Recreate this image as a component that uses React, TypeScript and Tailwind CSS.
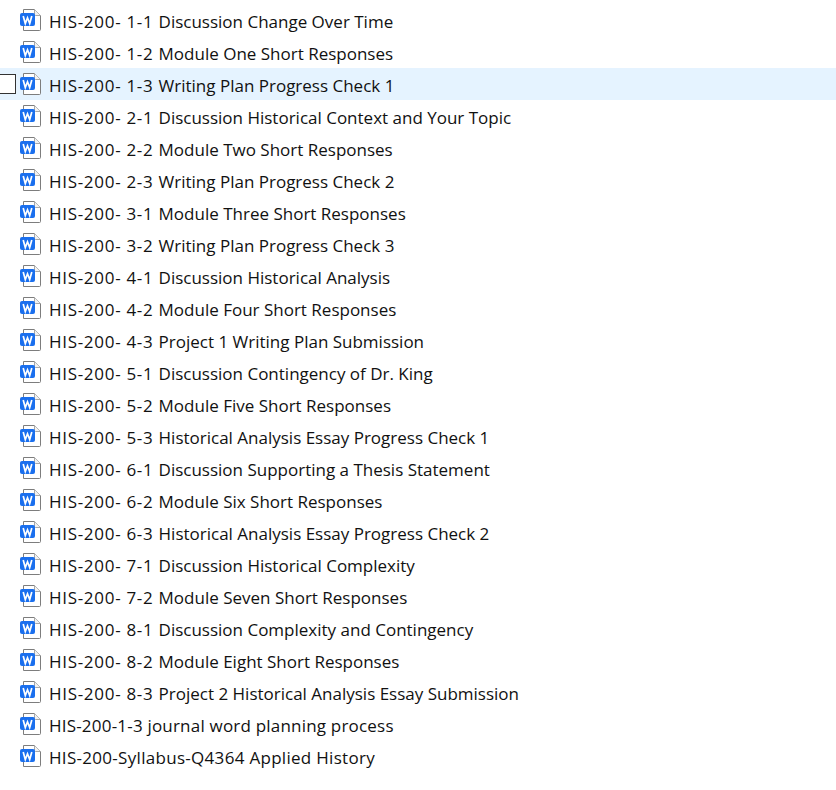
const FILES = [
  'HIS-200- 1-1 Discussion Change Over Time',
  'HIS-200- 1-2 Module One Short Responses',
  'HIS-200- 1-3 Writing Plan Progress Check 1',
  'HIS-200- 2-1 Discussion Historical Context and Your Topic',
  'HIS-200- 2-2 Module Two Short Responses',
  'HIS-200- 2-3 Writing Plan Progress Check 2',
  'HIS-200- 3-1 Module Three Short Responses',
  'HIS-200- 3-2 Writing Plan Progress Check 3',
  'HIS-200- 4-1 Discussion Historical Analysis',
  'HIS-200- 4-2 Module Four Short Responses',
  'HIS-200- 4-3 Project 1 Writing Plan Submission',
  'HIS-200- 5-1 Discussion Contingency of Dr. King',
  'HIS-200- 5-2 Module Five Short Responses',
  'HIS-200- 5-3 Historical Analysis Essay Progress Check 1',
  'HIS-200- 6-1 Discussion Supporting a Thesis Statement',
  'HIS-200- 6-2 Module Six Short Responses',
  'HIS-200- 6-3 Historical Analysis Essay Progress Check 2',
  'HIS-200- 7-1 Discussion Historical Complexity',
  'HIS-200- 7-2 Module Seven Short Responses',
  'HIS-200- 8-1 Discussion Complexity and Contingency',
  'HIS-200- 8-2 Module Eight Short Responses',
  'HIS-200- 8-3 Project 2 Historical Analysis Essay Submission',
  'HIS-200-1-3 journal word planning process',
  'HIS-200-Syllabus-Q4364 Applied History',
]

function WordIcon() {
  return (
    <svg width="22" height="23" viewBox="0 0 22 23" className="mt-[5px] shrink-0 self-start" aria-hidden="true">
      <path d="M3.5 .5H14.5L20.5 6.5V20.5Q20.5 21.5 19.5 21.5H3.5Z" fill="#fff" stroke="#7d7d7d" />
      <path d="M14.5 .5V5.5Q14.5 6.5 15.5 6.5H20.5" fill="#f2f2f2" stroke="#a8a8a8" />
      <rect x="0" y="4" width="15" height="13" rx="2" fill="#1a6fee" />
      <path d="M3.2 7L5.3 14.6L7.5 8.8L9.7 14.6L11.8 7" fill="none" stroke="#fff" strokeWidth="1.7" />
    </svg>
  )
}

function FileName({ name }: { name: string }) {
  const match = name.match(/^(HIS-200- \d-\d )(.*)$/)
  if (!match) {
    return <span className={name.includes('Syllabus') ? 'tracking-[0.3px]' : 'tracking-[0.2px]'}>{name}</span>
  }
  return (
    <>
      <span className="tracking-[0.7px]">{match[1]}</span>
      {match[2]}
    </>
  )
}

export default function App() {
  return (
    <div className="min-h-[790px] bg-white pt-[4px] font-['Open_Sans',sans-serif] text-[#111]">
      {FILES.map((name, i) => (
        <div
          key={name}
          className={`flex h-[32px] items-center pl-[20px] ${i === 2 ? 'relative bg-[#e5f3ff]' : ''}`}
        >
          {i === 2 && (
            <span className="absolute left-[-2px] top-[6px] h-[20px] w-[18px] border border-[#333] bg-white" />
          )}
          <WordIcon />
          <span className="ml-[7px] pt-[4px] text-[17px] leading-[30px] whitespace-pre">
            <FileName name={name} />
          </span>
        </div>
      ))}
    </div>
  )
}
